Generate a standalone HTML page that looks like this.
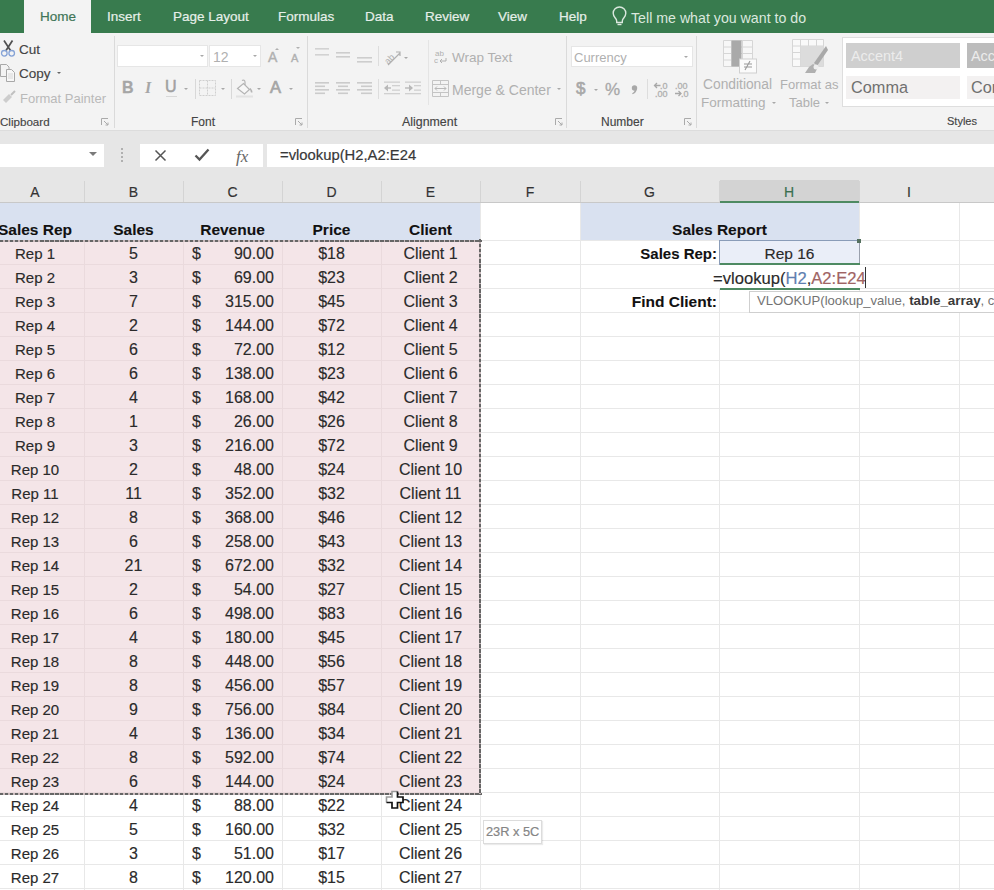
<!DOCTYPE html><html><head><meta charset="utf-8"><style>
*{margin:0;padding:0;box-sizing:border-box}
html,body{width:994px;height:890px;overflow:hidden;background:#fff;font-family:"Liberation Sans",sans-serif}
.a{position:absolute}
.t{position:absolute;white-space:nowrap;line-height:1}
.tab{position:absolute;top:10px;font-size:13.5px;color:#e6efe9;white-space:nowrap;line-height:1;-webkit-text-stroke:0.2px #e6efe9}
.rl{color:#b0b0b0;font-size:13px}
.gl{color:#444;font-size:12px;-webkit-text-stroke:0.15px #444}
.sep{position:absolute;width:1px;background:#dadada}
.cell{position:absolute;font-size:16px;color:#2a2a2a;line-height:1;white-space:nowrap;-webkit-text-stroke:0.15px #2a2a2a}
.b{font-weight:bold;color:#111;-webkit-text-stroke:0.1px #111}
.hdr{position:absolute;top:185px;font-size:14px;color:#333;line-height:1;-webkit-text-stroke:0.15px #333}
.dd{position:absolute;width:0;height:0;border-left:2.5px solid transparent;border-right:2.5px solid transparent;border-top:2.5px solid #a8a8a8}
svg{position:absolute}
</style></head><body>
<div class="a" style="left:0;top:0;width:994px;height:33px;background:#387b4e"></div>
<div class="a" style="left:24px;top:0;width:67px;height:33px;background:#f3f3f3"></div>
<div class="tab" style="left:40px;color:#3f7658;-webkit-text-stroke:0.2px #3f7658">Home</div>
<div class="tab" style="left:107px">Insert</div>
<div class="tab" style="left:173px">Page Layout</div>
<div class="tab" style="left:278px">Formulas</div>
<div class="tab" style="left:365px">Data</div>
<div class="tab" style="left:425px">Review</div>
<div class="tab" style="left:498px">View</div>
<div class="tab" style="left:559px">Help</div>
<svg style="left:611px;top:6px" width="17" height="20" viewBox="0 0 17 20"><path d="M8.5 1a6.3 6.3 0 0 0-6.3 6.3c0 2.3 1.2 3.6 2.3 5 .8 1 1.2 1.8 1.2 3v1.2h5.6v-1.2c0-1.2.4-2 1.2-3 1.1-1.4 2.3-2.7 2.3-5A6.3 6.3 0 0 0 8.5 1z" fill="none" stroke="#dbe8df" stroke-width="1.4"/><path d="M6.5 18.5h4" stroke="#dbe8df" stroke-width="1.4"/></svg>
<div class="tab" style="left:631px;top:11px;font-size:14.2px;color:#dbe8df;-webkit-text-stroke:0">Tell me what you want to do</div>
<div class="a" style="left:0;top:33px;width:994px;height:97px;background:#f3f3f3"></div>
<div class="a" style="left:0;top:130px;width:994px;height:73px;background:#e6e6e6"></div>
<div class="a" style="left:0;top:130px;width:994px;height:1px;background:#dcdcdc"></div>
<div class="sep" style="left:114px;top:36px;height:92px"></div>
<div class="sep" style="left:307px;top:36px;height:92px"></div>
<div class="sep" style="left:566px;top:36px;height:92px"></div>
<div class="sep" style="left:696px;top:36px;height:92px"></div>
<div class="sep" style="left:428px;top:40px;height:65px;background:#e4e4e4"></div>
<svg style="left:0px;top:40px" width="17" height="18" viewBox="0 0 17 18"><path d="M4 0.5l6.5 10M12.5 0.5L6 10.5" stroke="#505050" stroke-width="1.7" fill="none"/><circle cx="4.3" cy="13.3" r="2.8" fill="none" stroke="#86a3d6" stroke-width="1.3"/><circle cx="11.7" cy="13.3" r="2.8" fill="none" stroke="#86a3d6" stroke-width="1.3"/></svg>
<div class="t gl" style="left:19px;top:43px;font-size:13.5px">Cut</div>
<svg style="left:0px;top:64px" width="17" height="18" viewBox="0 0 17 18"><path d="M0.5 0.5h6l2.5 2.5v9.5h-8.5z" fill="#f3f3f3" stroke="#a8a8a8"/><path d="M6.5 5.5h5l3 3v9h-8z" fill="#f7f7f7" stroke="#a8a8a8"/><path d="M8 10h5M8 12h5M8 14h5" stroke="#d8d8d8"/></svg>
<div class="t gl" style="left:19px;top:67px;font-size:13.5px">Copy</div>
<div class="dd" style="left:57px;top:72px;border-top-color:#666"></div>
<svg style="left:2px;top:90px" width="16" height="14" viewBox="0 0 16 14"><path d="M1 10l6-6 3 3-6 6z" fill="#cdcdcd"/><path d="M9 5l4-4" stroke="#c0c0c0" stroke-width="2"/></svg>
<div class="t rl" style="left:20px;top:92px;color:#b9b9b9">Format Painter</div>
<div class="t gl" style="left:0px;top:116px;font-size:11.6px">Clipboard</div>
<svg style="left:101px;top:118px" width="8" height="8" viewBox="0 0 8 8"><path d="M0.5 7V0.5H7M3 3l4 4M4.5 7H7V4.5" stroke="#aaa" fill="none"/></svg>
<svg style="left:295px;top:118px" width="8" height="8" viewBox="0 0 8 8"><path d="M0.5 7V0.5H7M3 3l4 4M4.5 7H7V4.5" stroke="#aaa" fill="none"/></svg>
<svg style="left:555px;top:118px" width="8" height="8" viewBox="0 0 8 8"><path d="M0.5 7V0.5H7M3 3l4 4M4.5 7H7V4.5" stroke="#aaa" fill="none"/></svg>
<svg style="left:684px;top:118px" width="8" height="8" viewBox="0 0 8 8"><path d="M0.5 7V0.5H7M3 3l4 4M4.5 7H7V4.5" stroke="#aaa" fill="none"/></svg>
<div class="a" style="left:117px;top:45px;width:91px;height:22px;background:#fff;border:1px solid #e6e6e6"></div>
<div class="dd" style="left:200px;top:55px;border-width:2.5px 2.5px 0 2.5px"></div>
<div class="a" style="left:209px;top:45px;width:52px;height:22px;background:#fff;border:1px solid #e6e6e6"></div>
<div class="dd" style="left:253px;top:55px;border-width:2.5px 2.5px 0 2.5px"></div>
<div class="t rl" style="left:213px;top:50px;font-size:14px">12</div>
<div class="t rl" style="left:268px;top:50px;font-size:14px;-webkit-text-stroke:0.4px #b0b0b0">A</div><div class="dd" style="left:275px;top:48px;border-width:0 2.5px 2.5px 2.5px;border-bottom:2.5px solid #b0b0b0"></div>
<div class="t rl" style="left:291px;top:53px;font-size:11px;-webkit-text-stroke:0.4px #b0b0b0">A</div><div class="dd" style="left:296px;top:47px;border-width:2.5px 2.5px 0 2.5px;border-top-color:#b0b0b0"></div>
<div class="t rl" style="left:122px;top:79px;font:bold 16px 'Liberation Sans';color:#a6a6a6;-webkit-text-stroke:0.3px #a6a6a6">B</div>
<div class="t rl" style="left:145px;top:79px;font:bold italic 16px 'Liberation Serif';color:#a6a6a6">I</div>
<div class="t rl" style="left:165px;top:79px;font-size:16px;color:#a0a0a0;-webkit-text-stroke:0.5px #a0a0a0">U</div>
<div class="a" style="left:166px;top:96px;width:11px;height:1px;background:#d8d8d8"></div>
<div class="dd" style="left:184px;top:88px"></div>
<div class="sep" style="left:195px;top:79px;height:20px;background:#d8d8d8"></div>
<svg style="left:199px;top:80px" width="18" height="17" viewBox="0 0 18 17"><path d="M0.5 0.5h16v15h-16zM8.5 0.5v15M0.5 8h16" stroke="#cfcfcf" stroke-dasharray="2 1" fill="none"/></svg>
<div class="dd" style="left:221px;top:88px"></div>
<div class="sep" style="left:231px;top:79px;height:20px;background:#d8d8d8"></div>
<svg style="left:236px;top:79px" width="18" height="19" viewBox="0 0 18 19"><path d="M6 1.5c1.5-1 3 0 3 1.5v4" stroke="#b4b4b4" stroke-width="1.2" fill="none"/><path d="M1.5 9.5l6-5 6 6-5 4.5z" stroke="#b4b4b4" stroke-width="1.2" fill="#f7f7f7"/><path d="M14 9.5c1.2 1.5 1.8 2.8 1.5 4" stroke="#b4b4b4" stroke-width="1.6" fill="none"/><rect x="0" y="16.5" width="17" height="2" fill="#e2e2e2"/></svg>
<div class="dd" style="left:257px;top:88px"></div>
<div class="t" style="left:270px;top:79px;font-size:16.5px;color:#a6a6a6;-webkit-text-stroke:0.7px #a6a6a6">A</div>
<div class="dd" style="left:289px;top:88px"></div>
<div class="t gl" style="left:191px;top:116px">Font</div>
<svg style="left:314px;top:47px" width="18" height="16"><rect x="1" y="1" width="14" height="1.6" fill="#d2d2d2"/><rect x="1" y="7" width="14" height="1.6" fill="#d2d2d2"/></svg>
<svg style="left:335px;top:50px" width="18" height="16"><rect x="1" y="2" width="14" height="1.6" fill="#cdcdcd"/><rect x="1" y="6" width="14" height="1.6" fill="#cdcdcd"/></svg>
<svg style="left:356px;top:54px" width="18" height="16"><rect x="1" y="3" width="15" height="1.6" fill="#cdcdcd"/><rect x="1" y="7" width="15" height="1.6" fill="#cdcdcd"/></svg>
<svg style="left:314px;top:81px" width="18" height="16"><rect x="1" y="1" width="14" height="1.6" fill="#cbcbcb"/><rect x="1" y="4.5" width="10" height="1.6" fill="#cbcbcb"/><rect x="1" y="8" width="14" height="1.6" fill="#cbcbcb"/><rect x="1" y="11.5" width="10" height="1.6" fill="#cbcbcb"/></svg>
<svg style="left:335px;top:81px" width="18" height="16"><rect x="1" y="1" width="14" height="1.6" fill="#cbcbcb"/><rect x="3" y="4.5" width="10" height="1.6" fill="#cbcbcb"/><rect x="1" y="8" width="14" height="1.6" fill="#cbcbcb"/><rect x="3" y="11.5" width="10" height="1.6" fill="#cbcbcb"/></svg>
<svg style="left:356px;top:81px" width="18" height="16"><rect x="1" y="1" width="15" height="1.6" fill="#cbcbcb"/><rect x="5" y="4.5" width="11" height="1.6" fill="#cbcbcb"/><rect x="1" y="8" width="15" height="1.6" fill="#cbcbcb"/><rect x="5" y="11.5" width="11" height="1.6" fill="#cbcbcb"/></svg>
<div class="sep" style="left:378px;top:46px;height:20px;background:#dddddd"></div>
<div class="sep" style="left:378px;top:79px;height:20px;background:#dddddd"></div>
<svg style="left:382px;top:48px" width="20" height="18" viewBox="0 0 20 18"><text x="1" y="13" transform="rotate(-45 8 9)" font-family="Liberation Sans" font-size="9" fill="#b0b0b0">ab</text><path d="M6 17L18 5M14 4h4v4" stroke="#b0b0b0" stroke-width="1.2" fill="none"/></svg>
<div class="dd" style="left:404px;top:57px;border-width:2px 2px 0 2px"></div>
<svg style="left:383px;top:81px" width="40" height="14" viewBox="0 0 40 14"><path d="M1 7l4-3.5v7z" fill="#b8b8b8"/><rect x="4" y="6.3" width="4" height="1.4" fill="#b8b8b8"/><rect x="1" y="0.5" width="16" height="1.3" fill="#d0d0d0"/><rect x="9" y="4" width="8" height="1.3" fill="#d0d0d0"/><rect x="9" y="8.5" width="8" height="1.3" fill="#d0d0d0"/><rect x="1" y="12" width="16" height="1.3" fill="#d0d0d0"/><path d="M30 7l-4-3.5v7z" fill="#b8b8b8"/><rect x="22" y="6.3" width="5" height="1.4" fill="#b8b8b8"/><rect x="22" y="0.5" width="16" height="1.3" fill="#d0d0d0"/><rect x="31" y="4" width="7" height="1.3" fill="#d0d0d0"/><rect x="31" y="8.5" width="7" height="1.3" fill="#d0d0d0"/><rect x="22" y="12" width="16" height="1.3" fill="#d0d0d0"/></svg>
<svg style="left:434px;top:49px" width="14" height="15" viewBox="0 0 14 15"><text x="1" y="7" font-family="Liberation Sans" font-size="8" fill="#b0b0b0">ab</text><text x="0" y="14" font-family="Liberation Sans" font-size="8" fill="#b0b0b0">c</text><path d="M12 9v3H6M8 10l-2 2 2 2" stroke="#b0b0b0" fill="none"/></svg>
<div class="t rl" style="left:452px;top:51px;font-size:13.5px">Wrap Text</div>
<svg style="left:432px;top:80px" width="17" height="17" viewBox="0 0 17 17"><path d="M0.5 0.5h16v16h-16zM0.5 4.5h16M0.5 12.5h16M8.5 0.5v4M8.5 12.5v4" stroke="#c4c4c4" fill="none"/><path d="M3 8.5h11M5 6.5l-2 2 2 2M12 6.5l2 2-2 2" stroke="#b8b8b8" fill="none"/></svg>
<div class="t rl" style="left:452px;top:83px;font-size:14px">Merge &amp; Center</div>
<div class="dd" style="left:557px;top:88px;border-width:2px 2px 0 2px"></div>
<div class="t gl" style="left:402px;top:116px;font-size:12.4px">Alignment</div>
<div class="a" style="left:571px;top:46px;width:122px;height:21px;background:#fff;border:1px solid #e6e6e6"></div>
<div class="t rl" style="left:574px;top:51px;font-size:13px">Currency</div>
<div class="dd" style="left:684px;top:56px;border-width:2px 2px 0 2px"></div>
<div class="t" style="left:576px;top:80px;font-size:17px;color:#a8a8a8;-webkit-text-stroke:0.6px #a8a8a8">$</div>
<div class="dd" style="left:594px;top:89px;border-width:2px 2px 0 2px"></div>
<div class="t" style="left:605px;top:81px;font-size:17px;color:#a8a8a8;-webkit-text-stroke:0.3px #a8a8a8">%</div>
<svg style="left:630px;top:85px" width="9" height="10" viewBox="0 0 9 10"><circle cx="4.5" cy="3" r="2.7" fill="#a8a8a8"/><path d="M6.8 3.5C7 6.5 5 8.5 2.5 9.3L2.2 8.3C3.8 7.5 4.8 6.2 4.6 4.5z" fill="#a8a8a8"/></svg>
<div class="sep" style="left:647px;top:79px;height:20px;background:#dddddd"></div>
<svg style="left:653px;top:81px" width="40" height="17" viewBox="0 0 40 17"><g font-family="Liberation Sans" font-size="9" fill="#b0b0b0" stroke="#b0b0b0" stroke-width="0.3"><text x="7" y="8">.0</text><text x="2" y="16">.00</text><text x="22" y="8">.00</text><text x="28" y="16">.0</text></g><path d="M1.5 4.5h6M4 2l-2.5 2.5L4 7" stroke="#a8a8a8" stroke-width="1.3" fill="none"/><path d="M22 12.5h6M25.5 10l2.5 2.5-2.5 2.5" stroke="#a8a8a8" stroke-width="1.3" fill="none"/></svg>
<div class="t gl" style="left:601px;top:116px">Number</div>
<svg style="left:723px;top:40px" width="35" height="34" viewBox="0 0 35 34"><path d="M0.5 0.5h29v26h-29zM0.5 7h29M0.5 13.5h29M0.5 20h29M8.5 0.5v26M19.5 0.5v26" stroke="#d6d6d6" fill="#f7f7f7"/><rect x="8.5" y="0.5" width="10" height="26" fill="#a9a9a9"/><rect x="16.5" y="19" width="17" height="14" fill="#fbfbfb" stroke="#cfcfcf"/><path d="M21 24h8M21 27h8M27 21l-5 9" stroke="#9a9a9a" stroke-width="1.1"/></svg>
<div class="t rl" style="left:703px;top:78px;font-size:13.8px">Conditional</div>
<div class="t rl" style="left:701px;top:96px;font-size:13.5px">Formatting</div>
<div class="dd" style="left:772px;top:102px;border-width:2px 2px 0 2px"></div>
<svg style="left:792px;top:39px" width="38" height="35" viewBox="0 0 38 35"><path d="M0.5 0.5h31v27h-31zM0.5 7h31M0.5 13.5h31M0.5 20h31M8.5 0.5v27M16.5 0.5v27M24.5 0.5v27" stroke="#d6d6d6" fill="#f9f9f9"/><rect x="8.5" y="7" width="23" height="20.5" fill="#dcdcdc"/><path d="M34 7L22 24l3 3L36 11z" fill="#a9a9a9"/><path d="M21 25l-4 3-4 6h10l3-6z" fill="#b0b0b0"/><circle cx="24" cy="28" r="2.5" fill="#eee"/></svg>
<div class="t rl" style="left:780px;top:78px;font-size:13px">Format as</div>
<div class="t rl" style="left:789px;top:96px;font-size:13px">Table</div>
<div class="dd" style="left:825px;top:102px;border-width:2px 2px 0 2px"></div>
<div class="a" style="left:842px;top:37px;width:160px;height:70px;background:#fff;border:1px solid #dedede"></div>
<div class="a" style="left:846px;top:43px;width:114px;height:25px;background:#cfcfcf"></div>
<div class="t" style="left:851px;top:49px;font-size:14.4px;color:#ececec">Accent4</div>
<div class="a" style="left:967px;top:43px;width:40px;height:25px;background:#bcbcbc"></div>
<div class="t" style="left:971px;top:49px;font-size:14.4px;color:#ececec">Acc</div>
<div class="a" style="left:846px;top:76px;width:114px;height:23px;background:#f3f1f1"></div>
<div class="t" style="left:851px;top:79px;font-size:16.3px;color:#707070">Comma</div>
<div class="a" style="left:967px;top:76px;width:40px;height:23px;background:#f3f1f1"></div>
<div class="t" style="left:971px;top:79px;font-size:16.3px;color:#707070">Com</div>
<div class="t gl" style="left:947px;top:116px;font-size:11px">Styles</div>
<div class="a" style="left:0;top:144px;width:104px;height:23px;background:#fff"></div>
<div class="a" style="left:140px;top:144px;width:123px;height:23px;background:#fff"></div>
<div class="a" style="left:267px;top:144px;width:727px;height:23px;background:#fff"></div>
<div class="t" style="left:280px;top:148px;font-size:14.8px;color:#383838;-webkit-text-stroke:0.2px #383838">=vlookup(H2,A2:E24</div>
<div class="dd" style="left:89px;top:152px;border-width:4px 4px 0 4px;border-top-color:#7a7a7a"></div>
<div class="a" style="left:121px;top:148px;width:2px;height:14px;border-left:2px dotted #b0b0b0"></div>
<svg style="left:154px;top:149px" width="13" height="13" viewBox="0 0 13 13"><path d="M1.5 1.5l10 10M11.5 1.5l-10 10" stroke="#555" stroke-width="1.5"/></svg>
<svg style="left:194px;top:148px" width="16" height="14" viewBox="0 0 16 14"><path d="M1.5 7.5l4 4 9-10" stroke="#555" stroke-width="2.3" fill="none"/></svg>
<div class="t" style="left:236px;top:147px;font:italic 17px 'Liberation Serif';color:#666">fx</div>
<div class="a" style="left:0;top:202px;width:994px;height:1px;background:#c8c8c8"></div>
<div class="a" style="left:720px;top:180px;width:139px;height:23px;background:#d3d3d3"></div>
<div class="a" style="left:720px;top:201px;width:139px;height:2px;background:#4e8a62"></div>
<div class="hdr" style="left:-14px;width:98px;text-align:center;">A</div>
<div class="hdr" style="left:84px;width:99px;text-align:center;">B</div>
<div class="sep" style="left:84px;top:181px;height:21px;background:#d4d4d4"></div>
<div class="hdr" style="left:183px;width:99px;text-align:center;">C</div>
<div class="sep" style="left:183px;top:181px;height:21px;background:#d4d4d4"></div>
<div class="hdr" style="left:282px;width:99px;text-align:center;">D</div>
<div class="sep" style="left:282px;top:181px;height:21px;background:#d4d4d4"></div>
<div class="hdr" style="left:381px;width:99px;text-align:center;">E</div>
<div class="sep" style="left:381px;top:181px;height:21px;background:#d4d4d4"></div>
<div class="hdr" style="left:480px;width:100px;text-align:center;">F</div>
<div class="sep" style="left:480px;top:181px;height:21px;background:#d4d4d4"></div>
<div class="hdr" style="left:580px;width:139px;text-align:center;">G</div>
<div class="sep" style="left:580px;top:181px;height:21px;background:#d4d4d4"></div>
<div class="hdr" style="left:719px;width:140px;text-align:center;color:#3a6f4f;-webkit-text-stroke:0.15px #3a6f4f">H</div>
<div class="sep" style="left:719px;top:181px;height:21px;background:#d4d4d4"></div>
<div class="hdr" style="left:859px;width:100px;text-align:center;">I</div>
<div class="sep" style="left:859px;top:181px;height:21px;background:#d4d4d4"></div>
<div class="a" style="left:0;top:241px;width:480px;height:552px;background:#f4e5e8"></div>
<div class="a" style="left:0;top:203px;width:480px;height:38px;background:#d9e1f0"></div>
<div class="a" style="left:581px;top:203px;width:278px;height:38px;background:#d9e1f0"></div>
<div class="a" style="left:0;top:264px;width:480px;height:1px;background:#eadadd"></div>
<div class="a" style="left:480px;top:264px;width:514px;height:1px;background:#e8e8e8"></div>
<div class="a" style="left:0;top:288px;width:480px;height:1px;background:#eadadd"></div>
<div class="a" style="left:480px;top:288px;width:514px;height:1px;background:#e8e8e8"></div>
<div class="a" style="left:0;top:312px;width:480px;height:1px;background:#eadadd"></div>
<div class="a" style="left:480px;top:312px;width:514px;height:1px;background:#e8e8e8"></div>
<div class="a" style="left:0;top:336px;width:480px;height:1px;background:#eadadd"></div>
<div class="a" style="left:480px;top:336px;width:514px;height:1px;background:#e8e8e8"></div>
<div class="a" style="left:0;top:360px;width:480px;height:1px;background:#eadadd"></div>
<div class="a" style="left:480px;top:360px;width:514px;height:1px;background:#e8e8e8"></div>
<div class="a" style="left:0;top:384px;width:480px;height:1px;background:#eadadd"></div>
<div class="a" style="left:480px;top:384px;width:514px;height:1px;background:#e8e8e8"></div>
<div class="a" style="left:0;top:408px;width:480px;height:1px;background:#eadadd"></div>
<div class="a" style="left:480px;top:408px;width:514px;height:1px;background:#e8e8e8"></div>
<div class="a" style="left:0;top:432px;width:480px;height:1px;background:#eadadd"></div>
<div class="a" style="left:480px;top:432px;width:514px;height:1px;background:#e8e8e8"></div>
<div class="a" style="left:0;top:456px;width:480px;height:1px;background:#eadadd"></div>
<div class="a" style="left:480px;top:456px;width:514px;height:1px;background:#e8e8e8"></div>
<div class="a" style="left:0;top:480px;width:480px;height:1px;background:#eadadd"></div>
<div class="a" style="left:480px;top:480px;width:514px;height:1px;background:#e8e8e8"></div>
<div class="a" style="left:0;top:504px;width:480px;height:1px;background:#eadadd"></div>
<div class="a" style="left:480px;top:504px;width:514px;height:1px;background:#e8e8e8"></div>
<div class="a" style="left:0;top:528px;width:480px;height:1px;background:#eadadd"></div>
<div class="a" style="left:480px;top:528px;width:514px;height:1px;background:#e8e8e8"></div>
<div class="a" style="left:0;top:552px;width:480px;height:1px;background:#eadadd"></div>
<div class="a" style="left:480px;top:552px;width:514px;height:1px;background:#e8e8e8"></div>
<div class="a" style="left:0;top:576px;width:480px;height:1px;background:#eadadd"></div>
<div class="a" style="left:480px;top:576px;width:514px;height:1px;background:#e8e8e8"></div>
<div class="a" style="left:0;top:600px;width:480px;height:1px;background:#eadadd"></div>
<div class="a" style="left:480px;top:600px;width:514px;height:1px;background:#e8e8e8"></div>
<div class="a" style="left:0;top:624px;width:480px;height:1px;background:#eadadd"></div>
<div class="a" style="left:480px;top:624px;width:514px;height:1px;background:#e8e8e8"></div>
<div class="a" style="left:0;top:648px;width:480px;height:1px;background:#eadadd"></div>
<div class="a" style="left:480px;top:648px;width:514px;height:1px;background:#e8e8e8"></div>
<div class="a" style="left:0;top:672px;width:480px;height:1px;background:#eadadd"></div>
<div class="a" style="left:480px;top:672px;width:514px;height:1px;background:#e8e8e8"></div>
<div class="a" style="left:0;top:696px;width:480px;height:1px;background:#eadadd"></div>
<div class="a" style="left:480px;top:696px;width:514px;height:1px;background:#e8e8e8"></div>
<div class="a" style="left:0;top:720px;width:480px;height:1px;background:#eadadd"></div>
<div class="a" style="left:480px;top:720px;width:514px;height:1px;background:#e8e8e8"></div>
<div class="a" style="left:0;top:744px;width:480px;height:1px;background:#eadadd"></div>
<div class="a" style="left:480px;top:744px;width:514px;height:1px;background:#e8e8e8"></div>
<div class="a" style="left:0;top:768px;width:480px;height:1px;background:#eadadd"></div>
<div class="a" style="left:480px;top:768px;width:514px;height:1px;background:#e8e8e8"></div>
<div class="a" style="left:0;top:792px;width:480px;height:1px;background:#eadadd"></div>
<div class="a" style="left:480px;top:792px;width:514px;height:1px;background:#e8e8e8"></div>
<div class="a" style="left:0;top:816px;width:994px;height:1px;background:#e8e8e8"></div>
<div class="a" style="left:0;top:840px;width:994px;height:1px;background:#e8e8e8"></div>
<div class="a" style="left:0;top:864px;width:994px;height:1px;background:#e8e8e8"></div>
<div class="a" style="left:0;top:888px;width:994px;height:1px;background:#e8e8e8"></div>
<div class="a" style="left:480px;top:240px;width:514px;height:1px;background:#e8e8e8"></div>
<div class="a" style="left:84px;top:241px;width:1px;height:552px;background:#eadadd"></div>
<div class="a" style="left:84px;top:793px;width:1px;height:97px;background:#e8e8e8"></div>
<div class="a" style="left:183px;top:241px;width:1px;height:552px;background:#eadadd"></div>
<div class="a" style="left:183px;top:793px;width:1px;height:97px;background:#e8e8e8"></div>
<div class="a" style="left:282px;top:241px;width:1px;height:552px;background:#eadadd"></div>
<div class="a" style="left:282px;top:793px;width:1px;height:97px;background:#e8e8e8"></div>
<div class="a" style="left:381px;top:241px;width:1px;height:552px;background:#eadadd"></div>
<div class="a" style="left:381px;top:793px;width:1px;height:97px;background:#e8e8e8"></div>
<div class="a" style="left:480px;top:203px;width:1px;height:687px;background:#e8e8e8"></div>
<div class="a" style="left:580px;top:203px;width:1px;height:687px;background:#e8e8e8"></div>
<div class="a" style="left:719px;top:241px;width:1px;height:649px;background:#e8e8e8"></div>
<div class="a" style="left:859px;top:203px;width:1px;height:687px;background:#e8e8e8"></div>
<div class="a" style="left:959px;top:203px;width:1px;height:687px;background:#e8e8e8"></div>
<div class="cell b" style="left:-14px;width:98px;top:222px;text-align:center;font-size:15.5px">Sales Rep</div>
<div class="cell b" style="left:84px;width:99px;top:222px;text-align:center;font-size:15.5px">Sales</div>
<div class="cell b" style="left:183px;width:99px;top:222px;text-align:center;font-size:15.5px">Revenue</div>
<div class="cell b" style="left:282px;width:99px;top:222px;text-align:center;font-size:15.5px">Price</div>
<div class="cell b" style="left:381px;width:99px;top:222px;text-align:center;font-size:15.5px">Client</div>
<div class="cell b" style="left:580px;width:279px;top:222px;text-align:center;font-size:15.5px">Sales Report</div>
<div class="cell" style="left:-14px;width:98px;top:246px;text-align:center;font-size:15px">Rep 1</div>
<div class="cell" style="left:84px;width:99px;top:246px;text-align:center;">5</div>
<div class="cell" style="left:192px;top:246px">$</div>
<div class="cell" style="left:200px;width:74px;top:246px;text-align:right">90.00</div>
<div class="cell" style="left:282px;width:99px;top:246px;text-align:center;">$18</div>
<div class="cell" style="left:381px;width:99px;top:246px;text-align:center;">Client 1</div>
<div class="cell" style="left:-14px;width:98px;top:270px;text-align:center;font-size:15px">Rep 2</div>
<div class="cell" style="left:84px;width:99px;top:270px;text-align:center;">3</div>
<div class="cell" style="left:192px;top:270px">$</div>
<div class="cell" style="left:200px;width:74px;top:270px;text-align:right">69.00</div>
<div class="cell" style="left:282px;width:99px;top:270px;text-align:center;">$23</div>
<div class="cell" style="left:381px;width:99px;top:270px;text-align:center;">Client 2</div>
<div class="cell" style="left:-14px;width:98px;top:294px;text-align:center;font-size:15px">Rep 3</div>
<div class="cell" style="left:84px;width:99px;top:294px;text-align:center;">7</div>
<div class="cell" style="left:192px;top:294px">$</div>
<div class="cell" style="left:200px;width:74px;top:294px;text-align:right">315.00</div>
<div class="cell" style="left:282px;width:99px;top:294px;text-align:center;">$45</div>
<div class="cell" style="left:381px;width:99px;top:294px;text-align:center;">Client 3</div>
<div class="cell" style="left:-14px;width:98px;top:318px;text-align:center;font-size:15px">Rep 4</div>
<div class="cell" style="left:84px;width:99px;top:318px;text-align:center;">2</div>
<div class="cell" style="left:192px;top:318px">$</div>
<div class="cell" style="left:200px;width:74px;top:318px;text-align:right">144.00</div>
<div class="cell" style="left:282px;width:99px;top:318px;text-align:center;">$72</div>
<div class="cell" style="left:381px;width:99px;top:318px;text-align:center;">Client 4</div>
<div class="cell" style="left:-14px;width:98px;top:342px;text-align:center;font-size:15px">Rep 5</div>
<div class="cell" style="left:84px;width:99px;top:342px;text-align:center;">6</div>
<div class="cell" style="left:192px;top:342px">$</div>
<div class="cell" style="left:200px;width:74px;top:342px;text-align:right">72.00</div>
<div class="cell" style="left:282px;width:99px;top:342px;text-align:center;">$12</div>
<div class="cell" style="left:381px;width:99px;top:342px;text-align:center;">Client 5</div>
<div class="cell" style="left:-14px;width:98px;top:366px;text-align:center;font-size:15px">Rep 6</div>
<div class="cell" style="left:84px;width:99px;top:366px;text-align:center;">6</div>
<div class="cell" style="left:192px;top:366px">$</div>
<div class="cell" style="left:200px;width:74px;top:366px;text-align:right">138.00</div>
<div class="cell" style="left:282px;width:99px;top:366px;text-align:center;">$23</div>
<div class="cell" style="left:381px;width:99px;top:366px;text-align:center;">Client 6</div>
<div class="cell" style="left:-14px;width:98px;top:390px;text-align:center;font-size:15px">Rep 7</div>
<div class="cell" style="left:84px;width:99px;top:390px;text-align:center;">4</div>
<div class="cell" style="left:192px;top:390px">$</div>
<div class="cell" style="left:200px;width:74px;top:390px;text-align:right">168.00</div>
<div class="cell" style="left:282px;width:99px;top:390px;text-align:center;">$42</div>
<div class="cell" style="left:381px;width:99px;top:390px;text-align:center;">Client 7</div>
<div class="cell" style="left:-14px;width:98px;top:414px;text-align:center;font-size:15px">Rep 8</div>
<div class="cell" style="left:84px;width:99px;top:414px;text-align:center;">1</div>
<div class="cell" style="left:192px;top:414px">$</div>
<div class="cell" style="left:200px;width:74px;top:414px;text-align:right">26.00</div>
<div class="cell" style="left:282px;width:99px;top:414px;text-align:center;">$26</div>
<div class="cell" style="left:381px;width:99px;top:414px;text-align:center;">Client 8</div>
<div class="cell" style="left:-14px;width:98px;top:438px;text-align:center;font-size:15px">Rep 9</div>
<div class="cell" style="left:84px;width:99px;top:438px;text-align:center;">3</div>
<div class="cell" style="left:192px;top:438px">$</div>
<div class="cell" style="left:200px;width:74px;top:438px;text-align:right">216.00</div>
<div class="cell" style="left:282px;width:99px;top:438px;text-align:center;">$72</div>
<div class="cell" style="left:381px;width:99px;top:438px;text-align:center;">Client 9</div>
<div class="cell" style="left:-14px;width:98px;top:462px;text-align:center;font-size:15px">Rep 10</div>
<div class="cell" style="left:84px;width:99px;top:462px;text-align:center;">2</div>
<div class="cell" style="left:192px;top:462px">$</div>
<div class="cell" style="left:200px;width:74px;top:462px;text-align:right">48.00</div>
<div class="cell" style="left:282px;width:99px;top:462px;text-align:center;">$24</div>
<div class="cell" style="left:381px;width:99px;top:462px;text-align:center;">Client 10</div>
<div class="cell" style="left:-14px;width:98px;top:486px;text-align:center;font-size:15px">Rep 11</div>
<div class="cell" style="left:84px;width:99px;top:486px;text-align:center;">11</div>
<div class="cell" style="left:192px;top:486px">$</div>
<div class="cell" style="left:200px;width:74px;top:486px;text-align:right">352.00</div>
<div class="cell" style="left:282px;width:99px;top:486px;text-align:center;">$32</div>
<div class="cell" style="left:381px;width:99px;top:486px;text-align:center;">Client 11</div>
<div class="cell" style="left:-14px;width:98px;top:510px;text-align:center;font-size:15px">Rep 12</div>
<div class="cell" style="left:84px;width:99px;top:510px;text-align:center;">8</div>
<div class="cell" style="left:192px;top:510px">$</div>
<div class="cell" style="left:200px;width:74px;top:510px;text-align:right">368.00</div>
<div class="cell" style="left:282px;width:99px;top:510px;text-align:center;">$46</div>
<div class="cell" style="left:381px;width:99px;top:510px;text-align:center;">Client 12</div>
<div class="cell" style="left:-14px;width:98px;top:534px;text-align:center;font-size:15px">Rep 13</div>
<div class="cell" style="left:84px;width:99px;top:534px;text-align:center;">6</div>
<div class="cell" style="left:192px;top:534px">$</div>
<div class="cell" style="left:200px;width:74px;top:534px;text-align:right">258.00</div>
<div class="cell" style="left:282px;width:99px;top:534px;text-align:center;">$43</div>
<div class="cell" style="left:381px;width:99px;top:534px;text-align:center;">Client 13</div>
<div class="cell" style="left:-14px;width:98px;top:558px;text-align:center;font-size:15px">Rep 14</div>
<div class="cell" style="left:84px;width:99px;top:558px;text-align:center;">21</div>
<div class="cell" style="left:192px;top:558px">$</div>
<div class="cell" style="left:200px;width:74px;top:558px;text-align:right">672.00</div>
<div class="cell" style="left:282px;width:99px;top:558px;text-align:center;">$32</div>
<div class="cell" style="left:381px;width:99px;top:558px;text-align:center;">Client 14</div>
<div class="cell" style="left:-14px;width:98px;top:582px;text-align:center;font-size:15px">Rep 15</div>
<div class="cell" style="left:84px;width:99px;top:582px;text-align:center;">2</div>
<div class="cell" style="left:192px;top:582px">$</div>
<div class="cell" style="left:200px;width:74px;top:582px;text-align:right">54.00</div>
<div class="cell" style="left:282px;width:99px;top:582px;text-align:center;">$27</div>
<div class="cell" style="left:381px;width:99px;top:582px;text-align:center;">Client 15</div>
<div class="cell" style="left:-14px;width:98px;top:606px;text-align:center;font-size:15px">Rep 16</div>
<div class="cell" style="left:84px;width:99px;top:606px;text-align:center;">6</div>
<div class="cell" style="left:192px;top:606px">$</div>
<div class="cell" style="left:200px;width:74px;top:606px;text-align:right">498.00</div>
<div class="cell" style="left:282px;width:99px;top:606px;text-align:center;">$83</div>
<div class="cell" style="left:381px;width:99px;top:606px;text-align:center;">Client 16</div>
<div class="cell" style="left:-14px;width:98px;top:630px;text-align:center;font-size:15px">Rep 17</div>
<div class="cell" style="left:84px;width:99px;top:630px;text-align:center;">4</div>
<div class="cell" style="left:192px;top:630px">$</div>
<div class="cell" style="left:200px;width:74px;top:630px;text-align:right">180.00</div>
<div class="cell" style="left:282px;width:99px;top:630px;text-align:center;">$45</div>
<div class="cell" style="left:381px;width:99px;top:630px;text-align:center;">Client 17</div>
<div class="cell" style="left:-14px;width:98px;top:654px;text-align:center;font-size:15px">Rep 18</div>
<div class="cell" style="left:84px;width:99px;top:654px;text-align:center;">8</div>
<div class="cell" style="left:192px;top:654px">$</div>
<div class="cell" style="left:200px;width:74px;top:654px;text-align:right">448.00</div>
<div class="cell" style="left:282px;width:99px;top:654px;text-align:center;">$56</div>
<div class="cell" style="left:381px;width:99px;top:654px;text-align:center;">Client 18</div>
<div class="cell" style="left:-14px;width:98px;top:678px;text-align:center;font-size:15px">Rep 19</div>
<div class="cell" style="left:84px;width:99px;top:678px;text-align:center;">8</div>
<div class="cell" style="left:192px;top:678px">$</div>
<div class="cell" style="left:200px;width:74px;top:678px;text-align:right">456.00</div>
<div class="cell" style="left:282px;width:99px;top:678px;text-align:center;">$57</div>
<div class="cell" style="left:381px;width:99px;top:678px;text-align:center;">Client 19</div>
<div class="cell" style="left:-14px;width:98px;top:702px;text-align:center;font-size:15px">Rep 20</div>
<div class="cell" style="left:84px;width:99px;top:702px;text-align:center;">9</div>
<div class="cell" style="left:192px;top:702px">$</div>
<div class="cell" style="left:200px;width:74px;top:702px;text-align:right">756.00</div>
<div class="cell" style="left:282px;width:99px;top:702px;text-align:center;">$84</div>
<div class="cell" style="left:381px;width:99px;top:702px;text-align:center;">Client 20</div>
<div class="cell" style="left:-14px;width:98px;top:726px;text-align:center;font-size:15px">Rep 21</div>
<div class="cell" style="left:84px;width:99px;top:726px;text-align:center;">4</div>
<div class="cell" style="left:192px;top:726px">$</div>
<div class="cell" style="left:200px;width:74px;top:726px;text-align:right">136.00</div>
<div class="cell" style="left:282px;width:99px;top:726px;text-align:center;">$34</div>
<div class="cell" style="left:381px;width:99px;top:726px;text-align:center;">Client 21</div>
<div class="cell" style="left:-14px;width:98px;top:750px;text-align:center;font-size:15px">Rep 22</div>
<div class="cell" style="left:84px;width:99px;top:750px;text-align:center;">8</div>
<div class="cell" style="left:192px;top:750px">$</div>
<div class="cell" style="left:200px;width:74px;top:750px;text-align:right">592.00</div>
<div class="cell" style="left:282px;width:99px;top:750px;text-align:center;">$74</div>
<div class="cell" style="left:381px;width:99px;top:750px;text-align:center;">Client 22</div>
<div class="cell" style="left:-14px;width:98px;top:774px;text-align:center;font-size:15px">Rep 23</div>
<div class="cell" style="left:84px;width:99px;top:774px;text-align:center;">6</div>
<div class="cell" style="left:192px;top:774px">$</div>
<div class="cell" style="left:200px;width:74px;top:774px;text-align:right">144.00</div>
<div class="cell" style="left:282px;width:99px;top:774px;text-align:center;">$24</div>
<div class="cell" style="left:381px;width:99px;top:774px;text-align:center;">Client 23</div>
<div class="cell" style="left:-14px;width:98px;top:798px;text-align:center;font-size:15px">Rep 24</div>
<div class="cell" style="left:84px;width:99px;top:798px;text-align:center;">4</div>
<div class="cell" style="left:192px;top:798px">$</div>
<div class="cell" style="left:200px;width:74px;top:798px;text-align:right">88.00</div>
<div class="cell" style="left:282px;width:99px;top:798px;text-align:center;">$22</div>
<div class="cell" style="left:381px;width:99px;top:798px;text-align:center;">Client 24</div>
<div class="cell" style="left:-14px;width:98px;top:822px;text-align:center;font-size:15px">Rep 25</div>
<div class="cell" style="left:84px;width:99px;top:822px;text-align:center;">5</div>
<div class="cell" style="left:192px;top:822px">$</div>
<div class="cell" style="left:200px;width:74px;top:822px;text-align:right">160.00</div>
<div class="cell" style="left:282px;width:99px;top:822px;text-align:center;">$32</div>
<div class="cell" style="left:381px;width:99px;top:822px;text-align:center;">Client 25</div>
<div class="cell" style="left:-14px;width:98px;top:846px;text-align:center;font-size:15px">Rep 26</div>
<div class="cell" style="left:84px;width:99px;top:846px;text-align:center;">3</div>
<div class="cell" style="left:192px;top:846px">$</div>
<div class="cell" style="left:200px;width:74px;top:846px;text-align:right">51.00</div>
<div class="cell" style="left:282px;width:99px;top:846px;text-align:center;">$17</div>
<div class="cell" style="left:381px;width:99px;top:846px;text-align:center;">Client 26</div>
<div class="cell" style="left:-14px;width:98px;top:870px;text-align:center;font-size:15px">Rep 27</div>
<div class="cell" style="left:84px;width:99px;top:870px;text-align:center;">8</div>
<div class="cell" style="left:192px;top:870px">$</div>
<div class="cell" style="left:200px;width:74px;top:870px;text-align:right">120.00</div>
<div class="cell" style="left:282px;width:99px;top:870px;text-align:center;">$15</div>
<div class="cell" style="left:381px;width:99px;top:870px;text-align:center;">Client 27</div>
<div class="cell b" style="left:581px;width:136px;top:246px;text-align:right;font-size:15px">Sales Rep:</div>
<div class="a" style="left:719px;top:240px;width:141px;height:25px;background:#eaeef8;border:1px solid #8a9cb8;border-right-color:#9aa0ad"></div>
<div class="a" style="left:857px;top:239px;width:4px;height:4px;background:#55705f"></div>
<div class="a" style="left:720px;top:263px;width:140px;height:2px;background:#4e8a62"></div>
<div class="cell" style="left:720px;width:139px;top:246px;text-align:center;font-size:15.5px">Rep 16</div>
<div class="cell b" style="left:581px;width:136px;top:294px;text-align:right;font-size:15.5px">Find Client:</div>
<div class="a" style="left:712px;top:265px;width:156px;height:23px;background:#fff"></div>
<div class="a" style="left:720px;top:288px;width:140px;height:2px;background:#4e8a62"></div>
<div class="cell" style="left:713px;top:271px;font-size:16.6px">=vlookup(<span style="color:#5f7fb0;-webkit-text-stroke:0.2px #5f7fb0">H2</span>,<span style="color:#a06464;-webkit-text-stroke:0.2px #a06464">A2:E24</span></div>
<div class="a" style="left:865px;top:267px;width:1px;height:21px;background:#333"></div>
<div class="a" style="left:749px;top:291px;width:260px;height:22px;background:#fff;border:1px solid #cfcfcf"></div>
<div class="t" style="left:757px;top:294px;font-size:13.1px;color:#737373">VLOOKUP(lookup_value, <b style="color:#3a3a3a;font-size:13.4px">table_array</b>, c</div>
<div class="a" style="left:0;top:240px;width:482px;height:2px;background:repeating-linear-gradient(90deg,#666 0 3.5px,#c9b9bb 3.5px 5px)"></div>
<div class="a" style="left:0;top:793px;width:482px;height:2px;background:repeating-linear-gradient(90deg,#666 0 3.5px,#c9b9bb 3.5px 5px)"></div>
<div class="a" style="left:479px;top:239px;width:2px;height:556px;background:repeating-linear-gradient(180deg,#666 0 3.5px,#c9b9bb 3.5px 5px)"></div>
<div class="a" style="left:483px;top:820px;width:59px;height:24px;background:#fff;border:1px solid #dcdcdc;box-shadow:1px 1px 1px rgba(0,0,0,0.08)"></div>
<div class="t" style="left:486px;top:826px;font-size:12.8px;color:#858585;-webkit-text-stroke:0.2px #858585">23R x 5C</div>
<svg style="left:385px;top:790px" width="20" height="20" viewBox="0 0 20 20"><path d="M7 1.5h5.5v5.5h5.5v5.5h-5.5v5.5H7v-5.5H1.5V7H7z" fill="#fff"/><path d="M1.5 12.5V7H7V1.5h5.5" stroke="#9a9a9a" stroke-width="1.6" fill="none"/><path d="M12.5 1.5V7h5.5v5.5h-5.5v5.5H7v-5.5H1.5" stroke="#111" stroke-width="1.7" fill="none"/></svg>
</body></html>
